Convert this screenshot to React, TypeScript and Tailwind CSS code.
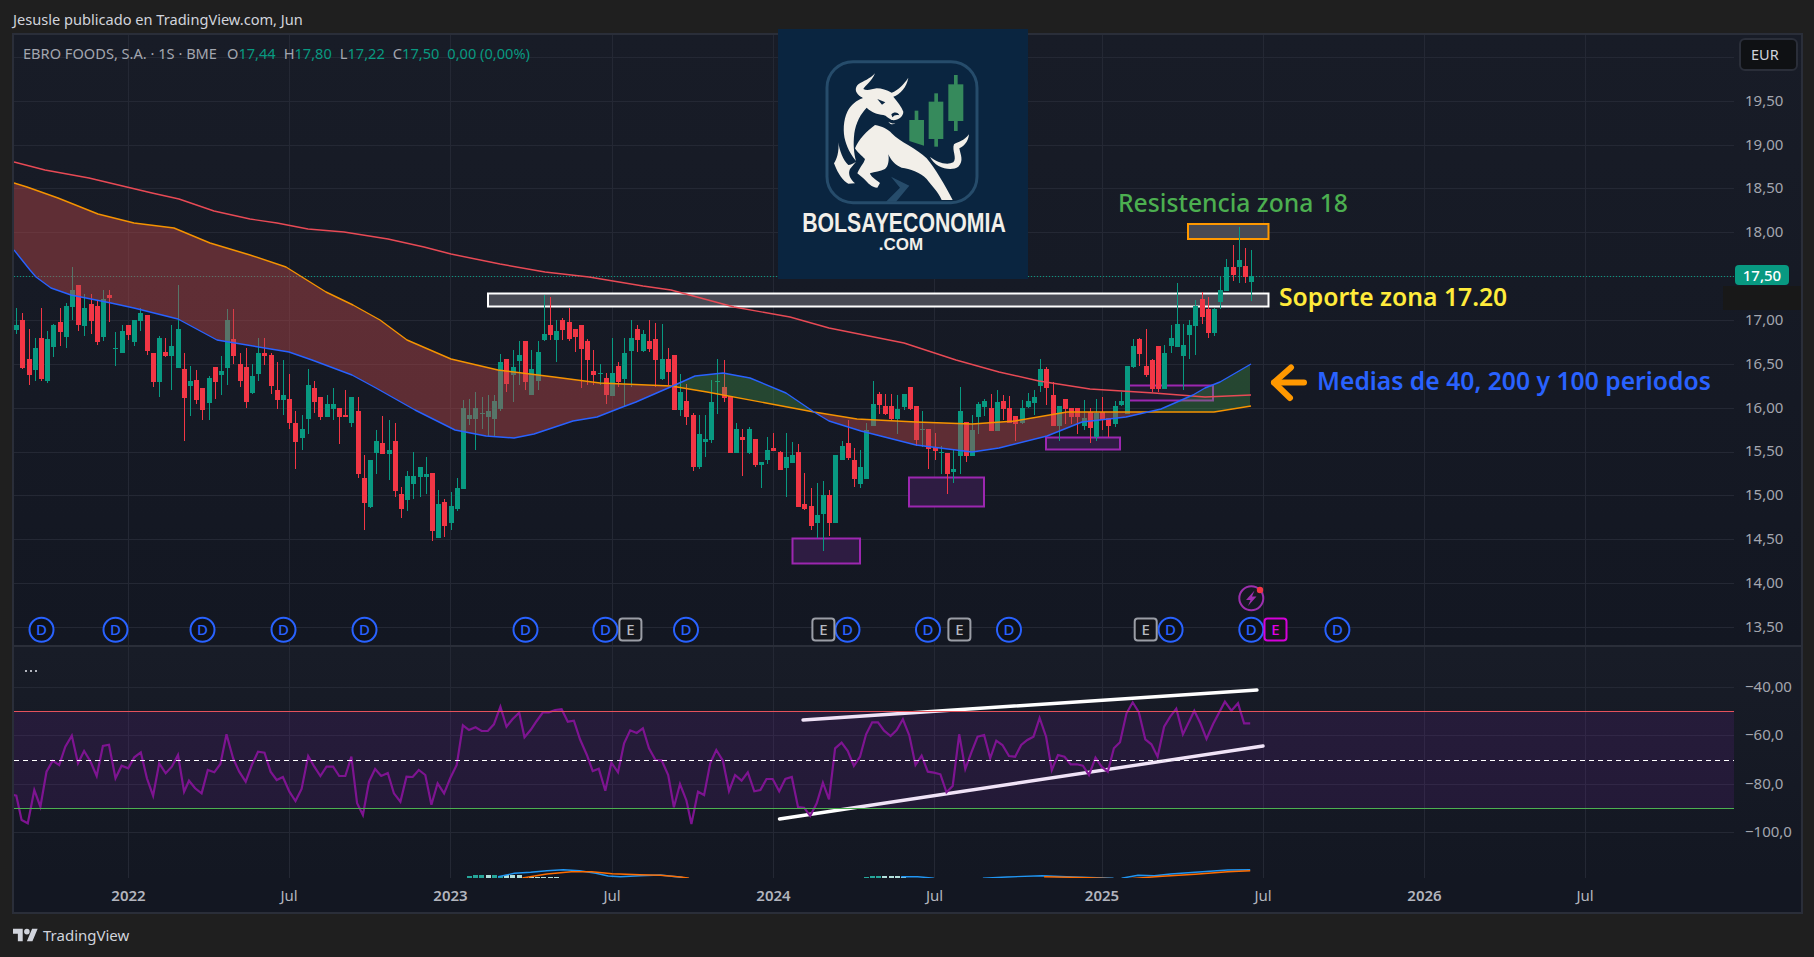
import { Fragment } from "react";

type Pt = [number, number];
type Candle = { green: boolean; top: number; bot: number; high: number; low: number };

// candle rows are "colour bodyTop bodyBottom wickTop wickBottom", read off the chart at y offset + v/3
const ROW_A =
  "g 165 180 113 192|r 150 295 128 298|r 267 315 178 345|g 234 300 205 332|r 204 327 113 332|g 207 333 183 338|g 165 231 162 262|r 156 186 113 228|g 108 201 100 234|g 60 111 -9 150|r 45 165 45 183|g 114 168 72 198|r 102 153 72 192|r 108 216 90 225|g 87 201 60 213|r 75 84 60 156|g 234 237 186 288|g 183 249 165 250|r 165 195 165 210|g 150 216 150 228|g 129 153 114 183|r 135 243 135 255|r 249 336 249 351|g 204 336 198 381|r 246 258 205 260|g 228 258 165 360|g 177 294 45 294|r 297 384 249 513|g 333 348 288 438|r 330 390 300 402|r 354 420 354 450|g 324 399 318 450|r 291 336 291 387|g 303 315 258 375|g 150 294 117 345|r 207 258 117 282|r 282 333 249 351|r 291 396 234 414|g 318 369 282 372|g 249 312 205 333|r 249 258 205 285|r 255 348 248 372|r 360 390 276 417|g 375 390 270 435|r 387 459 312 477|r 459 516 423 597|g 477 504 435 540|g 345 447 297 492|r 354 396 333 429|r 381 441 381 450|g 402 441 375 441|g 402 417 354 450|r 414 441 414 522|r 435 441 360 441|g 381 459 381 471|r 423 612 381 624|r 624 699 555 780|g 570 711 570 714|g 513 549 480 612|r 519 552 438 552|g 540 552 450 630|r 513 663 459 681|r 672 717 651 744|g 618 690 603 723|g 618 642 546 687|g 591 621 591 681|g 612 621 561 672|r 609 783 609 813|g 702 804 660 804|r 696 768 687 801|g 708 759 666 780|g 654 717 624 723|g 414 657 390 657|g 435 447 387 465|g 414 447 366 540|g 429 432 380 477|g 423 441 375 498|g 393 447 375 498|g 276 417 252 423|r 267 342 267 366|g 291 315 240 396|g 255 273 213 345|r 213 336 213 360|g 297 375 240 375|g 246 333 213 360|g 192 210 75 213|r 165 195 81 210|g 183 210 150 276|r 150 180 145 210|r 156 207 114 213|r 177 201 177 246|r 165 237 165 354|r 213 270 207 345|r 303 315 240 345|g 309 312 282 345|r 324 375 309 402|g 309 378 204 378|r 288 336 276 350";
const ROW_B =
  "g 189 267 145 348|g 144 183 90 292|r 117 150 105 186|g 132 183 120 186|r 153 177 90 186|r 147 210 100 290|g 207 267 102 270|r 207 246 174 285|r 195 360 195 360|g 306 360 252 378|r 333 381 283 405|r 375 531 370 543|g 432 531 374 537|g 447 456 375 500|g 336 450 270 459|g 273 276 207 372|r 291 324 210 336|r 318 489 318 489|g 417 489 400 489|r 441 450 417 558|g 417 489 411 492|r 447 525 447 531|g 516 525 516 594|g 480 510 440 522|r 474 483 429 483|r 486 540 483 540|g 501 534 429 621|g 495 519 456 519|r 486 651 462 651|r 642 657 548 660|r 648 708 594 720|g 675 699 579 744|g 615 672 573 783|r 615 699 600 738|g 495 699 495 699|g 468 510 453 510|r 459 504 390 510|r 510 567 474 591|g 531 582 480 594|g 420 567 400 567|g 342 408 273 408|r 312 345 306 372|r 348 372 312 375|r 348 387 312 390|g 357 387 315 432|g 312 351 312 360|r 291 357 291 360|r 348 450 348 468|g 417 420 363 470|r 417 477 417 537|r 470 483 430 510|g 486 489 468 552|r 489 552 489 612|g 537 546 480 579|g 363 498 292 552|r 396 498 396 516|g 420 498 375 498|g 342 381 336 432|g 333 351 327 378|r 354 423 312 423|g 336 423 300 423|r 333 357 315 390|r 354 399 318 399|r 378 402 378 453|g 354 399 330 402|g 333 351 310 354|g 321 339 300 375|g 237 288 207 306|r 237 294 232 345|r 315 408 276 408|g 348 408 348 453|r 327 357 327 402|r 354 381 354 402|r 354 381 354 432|g 384 408 330 420|r 366 414 354 459|g 369 441 327 453|r 366 390 321 420|r 384 408 384 441|g 348 402 333 411|g 333 345 306 348|g 228 372 228 372";
const ROW_C =
  "g 498 562 477 565|r 477 522 474 558|r 558 585 447 592|r 540 627 537 636|r 498 627 498 636|g 519 627 495 627|g 474 498 435 519|g 432 501 309 501|g 495 528 432 630|g 435 465 420 537|g 378 438 360 525|r 357 411 336 432|r 387 459 351 474|g 387 459 384 468|g 330 366 290 387|g 261 333 237 333|r 261 285 195 304|g 240 261 141 309|r 258 291 205 309|g 288 306 210 363";

function parseCandles(row: string, offset: number): Candle[] {
  return row.split("|").map((r) => {
    const [c, a, b, h, l] = r.split(" ");
    return {
      green: c === "g",
      top: offset + Number(a) / 3,
      bot: offset + Number(b) / 3,
      high: offset + Number(h) / 3,
      low: offset + Number(l) / 3,
    };
  });
}

const CANDLES = [
  ...parseCandles(ROW_A, 270),
  ...parseCandles(ROW_B, 290),
  ...parseCandles(ROW_C, 180),
];

const RED_MA: Pt[] = [
  [14, 162], [45, 170], [89, 178], [152, 193], [179, 199], [214, 211], [250, 219], [277, 223], [308, 229], [344, 232], [388, 239], [424, 247], [451, 254], [500, 264], [545, 272], [589, 277], [643, 286], [671, 290], [734, 307], [790, 317], [829, 328], [904, 343], [956, 360], [999, 372], [1039, 381], [1090, 389], [1154, 393], [1205, 397], [1251, 395],
];
const ORANGE_MA: Pt[] = [
  [14, 183], [27, 187], [58, 198], [98, 214], [134, 223], [174, 228], [210, 243], [250, 255], [286, 267], [326, 292], [353, 305], [380, 320], [407, 340], [451, 359], [498, 370], [554, 377], [600, 383], [671, 386], [707, 392], [766, 403], [814, 412], [857, 419], [916, 422], [972, 424], [1015, 421], [1067, 412], [1122, 412], [1185, 412], [1214, 412], [1251, 406],
];
const BLUE_MA: Pt[] = [
  [14, 250], [22, 260], [30, 270], [36, 277], [51, 288], [71, 295], [111, 303], [134, 308], [178, 319], [217, 340], [289, 352], [312, 360], [352, 375], [376, 388], [415, 410], [455, 430], [486, 436], [514, 438], [534, 434], [573, 421], [597, 417], [620, 408], [636, 402], [675, 385], [695, 376], [723, 373], [750, 378], [786, 393], [814, 412], [829, 421], [861, 431], [916, 445], [972, 452], [999, 448], [1047, 436], [1082, 422], [1126, 417], [1161, 409], [1193, 395], [1205, 388], [1220, 382], [1251, 364],
];

const RSI_A: Pt[] = [
  [33, 435], [40, 437], [53, 510], [68, 520], [84, 420], [99, 470], [114, 365], [129, 332], [145, 345], [160, 290], [176, 257], [191, 340], [206, 303], [222, 335], [237, 378], [252, 288], [267, 284], [283, 385], [298, 347], [314, 355], [329, 322], [345, 307], [360, 385], [375, 437], [390, 340], [406, 370], [421, 350], [436, 315], [451, 425], [463, 392], [478, 415], [494, 430], [509, 360], [525, 367], [540, 342], [555, 253], [571, 325], [586, 365], [602, 395], [617, 345], [632, 305], [648, 308], [663, 365], [678, 390], [693, 381], [709, 425], [724, 453], [739, 417], [755, 318], [770, 350], [785, 378], [800, 350], [816, 350], [831, 378], [846, 378], [861, 320], [875, 460], [889, 495], [904, 395], [919, 357], [934, 378], [950, 369], [965, 430], [981, 455], [996, 380], [1011, 381], [1026, 360], [1042, 375], [1057, 464], [1072, 400], [1088, 430], [1103, 385], [1119, 345], [1134, 226], [1149, 240], [1165, 232], [1180, 243], [1195, 243], [1210, 223], [1226, 170], [1241, 230], [1256, 207], [1272, 188], [1285, 262], [1300, 240], [1315, 213], [1330, 187], [1345, 187], [1360, 180], [1376, 178], [1391, 215], [1406, 212], [1421, 268], [1438, 315], [1452, 363], [1467, 356], [1483, 422], [1498, 338], [1514, 367], [1529, 280], [1544, 241], [1560, 249],
];
const RSI_B: Pt[] = [
  [7, 235], [22, 295], [38, 330], [53, 331], [69, 375], [83, 472], [98, 402], [114, 452], [126, 522], [142, 425], [157, 435], [172, 340], [187, 300], [203, 332], [218, 423], [233, 375], [249, 392], [264, 367], [280, 424], [295, 420], [310, 387], [325, 387], [341, 424], [356, 387], [372, 381], [387, 471], [402, 473], [417, 498], [433, 460], [448, 398], [463, 448], [478, 295], [494, 278], [509, 303], [524, 348], [539, 320], [554, 253], [569, 217], [583, 217], [598, 242], [614, 258], [629, 240], [644, 208], [660, 257], [675, 345], [690, 317], [705, 365], [720, 368], [736, 373], [751, 427], [766, 408], [782, 253], [797, 357], [812, 307], [827, 260], [843, 255], [858, 325], [873, 272], [888, 285], [904, 318], [919, 320], [934, 285], [949, 270], [964, 260], [979, 204], [995, 260], [1009, 360], [1024, 315], [1040, 320], [1055, 343], [1070, 343], [1085, 347], [1100, 375], [1116, 323], [1131, 350], [1146, 365], [1161, 295], [1176, 277], [1192, 190], [1207, 157], [1222, 187], [1238, 268], [1253, 283], [1268, 320], [1284, 230], [1299, 200], [1314, 176], [1330, 253], [1358, 182], [1373, 220], [1388, 267], [1404, 222], [1433, 155], [1449, 182], [1465, 160], [1480, 220], [1495, 220],
];

const RSI_LINE: Pt[] = [
  ...RSI_A.map(([x, y]): Pt => [x / 2.45, 650 + y / 3]),
  ...RSI_B.map(([x, y]): Pt => [640 + x / 2.45, 650 + y / 3]),
];

// macd lines only show where they poke up into the bottom of the pane
const MACD_LEFT = (x: number, y: number): Pt => [x / 2.45, 650 + y / 3];
const MACD_RIGHT = (x: number, y: number): Pt => [640 + x / 2.45, 650 + y / 3];
const MACD_BLUE: Pt[][] = [
  [MACD_LEFT(1220, 680), MACD_LEFT(1260, 670), MACD_LEFT(1300, 667), MACD_LEFT(1340, 662), MACD_LEFT(1380, 659), MACD_LEFT(1420, 662), MACD_LEFT(1460, 670), MACD_LEFT(1490, 678), MACD_LEFT(1520, 680), MACD_LEFT(1568, 677), MACD_RIGHT(50, 675), MACD_RIGHT(100, 682), MACD_RIGHT(120, 686)],
  [MACD_RIGHT(640, 680), MACD_RIGHT(680, 680), MACD_RIGHT(720, 685)],
  [MACD_RIGHT(840, 685), MACD_RIGHT(900, 681), MACD_RIGHT(985, 677), MACD_RIGHT(1060, 681), MACD_RIGHT(1160, 685)],
  [MACD_RIGHT(1180, 685), MACD_RIGHT(1220, 676), MACD_RIGHT(1260, 677), MACD_RIGHT(1300, 672), MACD_RIGHT(1360, 667), MACD_RIGHT(1440, 660), MACD_RIGHT(1495, 659)],
];
const MACD_ORANGE: Pt[][] = [
  [MACD_LEFT(1280, 684), MACD_LEFT(1340, 672), MACD_LEFT(1400, 665), MACD_LEFT(1450, 665), MACD_LEFT(1500, 671), MACD_LEFT(1568, 674), MACD_RIGHT(50, 676), MACD_RIGHT(100, 681), MACD_RIGHT(120, 685)],
  [MACD_RIGHT(990, 680), MACD_RIGHT(1100, 683), MACD_RIGHT(1160, 686)],
  [MACD_RIGHT(1200, 686), MACD_RIGHT(1280, 679), MACD_RIGHT(1360, 673), MACD_RIGHT(1440, 665), MACD_RIGHT(1495, 662)],
];
// x, top y, colour
const MACD_BARS: [number, number, string][] = [
  [467, 876, "#26a69a"], [473, 875, "#26a69a"], [479, 875, "#26a69a"], [486, 875, "#b2dfdb"], [492, 875, "#26a69a"], [498, 876, "#26a69a"], [504, 875, "#b2dfdb"], [510, 875, "#b2dfdb"], [517, 875, "#b2dfdb"], [523, 877, "#b2dfdb"], [529, 877, "#b2dfdb"], [535, 877, "#b2dfdb"], [541, 877, "#b2dfdb"], [548, 877, "#b2dfdb"], [554, 877, "#b2dfdb"],
  [864, 877, "#26a69a"], [870, 876, "#26a69a"], [876, 876, "#26a69a"], [882, 876, "#b2dfdb"], [889, 876, "#b2dfdb"], [895, 876, "#b2dfdb"], [901, 877, "#b2dfdb"],
];

const H_LINES = [57, 101, 145, 188, 232, 276, 320, 364, 408, 452, 495, 539, 583, 627];
const V_LINES = [128.5, 289.5, 450.5, 612.5, 773.5, 934.5, 1102.5, 1263.5, 1424.5, 1585.5];
const RSI_H_LINES = [687, 735, 784, 832];

const PRICES = ["19,50", "19,00", "18,50", "18,00", "17,50", "17,00", "16,50", "16,00", "15,50", "15,00", "14,50", "14,00", "13,50"];
const RSI_LABELS = ["−40,00", "−60,0", "−80,0", "−100,0"];

const TICKS: { x: number; label: string; bold?: boolean }[] = [
  { x: 128.5, label: "2022", bold: true },
  { x: 289, label: "Jul" },
  { x: 450.5, label: "2023", bold: true },
  { x: 612, label: "Jul" },
  { x: 773.5, label: "2024", bold: true },
  { x: 934.5, label: "Jul" },
  { x: 1102, label: "2025", bold: true },
  { x: 1263, label: "Jul" },
  { x: 1424.5, label: "2026", bold: true },
  { x: 1585, label: "Jul" },
];

const DIVIDENDS = [41.5, 115.5, 202.5, 283.5, 364.5, 525.5, 605.4, 686, 847.5, 928, 1009, 1170.6, 1251.3, 1337.4];
const EARNINGS = [630.4, 823.4, 959.4, 1145.7];

function yAt(points: Pt[], x: number): number {
  for (let i = 1; i < points.length; i++) {
    if (x <= points[i][0]) {
      const [x0, y0] = points[i - 1];
      const [x1, y1] = points[i];
      return y0 + ((y1 - y0) * (x - x0)) / (x1 - x0);
    }
  }
  return points[points.length - 1][1];
}

function toPath(points: Pt[]) {
  return points.map(([x, y]) => `${x.toFixed(1)},${y.toFixed(1)}`).join(" ");
}

// polygons between the blue and orange averages, red while orange is on top, green otherwise
function maBands() {
  const bands: { red: boolean; points: string }[] = [];
  let upper: Pt[] = [];
  let lower: Pt[] = [];
  let red = true;
  const flush = () => {
    if (upper.length > 1) {
      bands.push({ red, points: toPath([...upper, ...lower.reverse()]) });
    }
    upper = [];
    lower = [];
  };
  for (let x = 14; x <= 1251; x += 2) {
    const o = yAt(ORANGE_MA, x);
    const b = yAt(BLUE_MA, x);
    const nowRed = o < b;
    if (nowRed !== red) {
      upper.push([x, (o + b) / 2]);
      lower.push([x, (o + b) / 2]);
      flush();
      red = nowRed;
      upper.push([x, (o + b) / 2]);
      lower.push([x, (o + b) / 2]);
      continue;
    }
    upper.push([x, Math.min(o, b)]);
    lower.push([x, Math.max(o, b)]);
  }
  flush();
  return bands;
}

function Grid({ lines }: { lines: number[] }) {
  return (
    <g stroke="#242834" strokeWidth={1} shapeRendering="crispEdges">
      {lines.map((y) => (
        <line key={y} x1={14} x2={1734} y1={y + 0.5} y2={y + 0.5} />
      ))}
      {V_LINES.map((x) => (
        <line key={x} x1={x} x2={x} y1={0} y2={900} />
      ))}
    </g>
  );
}

function Zone({
  x,
  y,
  w,
  h,
  stroke,
  fill,
}: {
  x: number;
  y: number;
  w: number;
  h: number;
  stroke: string;
  fill: string;
}) {
  return <rect x={x} y={y} width={w} height={h} stroke={stroke} strokeWidth={2} fill={fill} />;
}

function Candles() {
  return (
    <g shapeRendering="crispEdges">
      {CANDLES.map((c, i) => {
        const cx = Math.round(16.2 + i * 6.206);
        const color = c.green ? "#089981" : "#f23645";
        return (
          <Fragment key={i}>
            <rect x={cx} y={c.high} width={1} height={c.low - c.high} fill={color} />
            <rect x={cx - 2} y={c.top} width={5} height={Math.max(c.bot - c.top, 1)} fill={color} />
          </Fragment>
        );
      })}
    </g>
  );
}

function EventMarkers() {
  return (
    <g fontSize={15} fontWeight={500} textAnchor="middle">
      {DIVIDENDS.map((x) => (
        <g key={x}>
          <circle cx={x} cy={629.7} r={12} fill="#0e1119" stroke="#2962ff" strokeWidth={2} />
          <text x={x} y={635} fill="#2962ff">
            D
          </text>
        </g>
      ))}
      {EARNINGS.map((x) => (
        <g key={x}>
          <rect x={x - 11} y={618.5} width={22} height={22} rx={3} fill="#14161c" stroke="#9b9ea6" strokeWidth={2} />
          <text x={x} y={635} fill="#b8bbc2">
            E
          </text>
        </g>
      ))}
      <rect x={1264.5} y={618.5} width={22} height={22} rx={3} fill="#14161c" stroke="#d500d9" strokeWidth={2} />
      <text x={1275.5} y={635} fill="#e000e6">
        E
      </text>
      <circle cx={1251.3} cy={598.3} r={12} fill="#151823" stroke="#9c2fae" strokeWidth={2} />
      <path d="M1254.5 590.5 L1246 600 L1250.5 600 L1248 606 L1256.5 596.5 L1252 596.5 Z" fill="#9c2fae" />
      <circle cx={1260} cy={590} r={3.2} fill="#f23645" />
    </g>
  );
}

function PricePlot() {
  return (
    <svg viewBox="14 35 1720 610" className="block h-[610px] w-[1720px] shrink-0">
      <Grid lines={H_LINES} />
      <line x1={14} x2={1736} y1={276.5} y2={276.5} stroke="#089981" strokeDasharray="1 2" shapeRendering="crispEdges" />

      <Zone x={488} y={293.5} w={780.5} h={13} stroke="#ffffff" fill="#484a54" />
      <Zone x={1188} y={224} w={80.5} h={15} stroke="#ff9800" fill="#484a54" />
      <Zone x={792.5} y={538.5} w={67.5} h={25} stroke="#9c27b0" fill="#2e1c42" />
      <Zone x={909} y={477.5} w={75} h={29} stroke="#9c27b0" fill="#2e1c42" />
      <Zone x={1046} y={437.5} w={74} h={12} stroke="#9c27b0" fill="#2e1c42" />
      <Zone x={1128} y={385.5} w={85} h={15} stroke="#9c27b0" fill="rgba(156,39,176,0.08)" />

      <Candles />

      {maBands().map((band, i) => (
        <polygon
          key={i}
          points={band.points}
          fill={band.red ? "rgba(184,71,74,0.45)" : "rgba(76,175,80,0.3)"}
        />
      ))}

      <g fill="none" strokeWidth={1.4} strokeLinejoin="round">
        <polyline points={toPath(RED_MA)} stroke="#e84a55" />
        <polyline points={toPath(ORANGE_MA)} stroke="#f59300" />
        <polyline points={toPath(BLUE_MA)} stroke="#2962ff" />
      </g>

      <g fill="none" stroke="#ff9800" strokeWidth={6} strokeLinecap="round" strokeLinejoin="round">
        <path d="M1291 367.5 L1274 382.5 L1290 398" />
        <path d="M1274 382.5 L1304 382.5" />
      </g>

      <EventMarkers />
    </svg>
  );
}

function RsiPlot() {
  return (
    <svg viewBox="14 647 1720 231" className="block h-[231px] w-[1720px] shrink-0">
      <Grid lines={RSI_H_LINES} />

      <g stroke="#ffffff" strokeWidth={3.4} strokeLinecap="round">
        <line x1={803} y1={720} x2={1257} y2={690} />
        <line x1={779.5} y1={819} x2={1263} y2={746} />
      </g>

      <rect x={14} y={711.5} width={1720} height={96.5} fill="rgba(140,36,194,0.13)" />

      <polyline points={toPath(RSI_LINE)} fill="none" stroke="#7e1491" strokeWidth={2.2} strokeLinejoin="miter" />

      <g shapeRendering="crispEdges">
        <line x1={14} x2={1734} y1={711.5} y2={711.5} stroke="#e5525c" />
        <line x1={14} x2={1734} y1={808.5} y2={808.5} stroke="#4caf50" />
        <line x1={14} x2={1734} y1={760.5} y2={760.5} stroke="#ffffff" strokeDasharray="5 4" />
      </g>

      <g shapeRendering="crispEdges">
        {MACD_BARS.map(([x, y, color]) => (
          <rect key={x} x={x} y={y} width={5} height={878 - y} fill={color} />
        ))}
      </g>
      <g fill="none" strokeWidth={1.4}>
        {MACD_BLUE.map((line, i) => (
          <polyline key={i} points={toPath(line)} stroke="#2196f3" />
        ))}
        {MACD_ORANGE.map((line, i) => (
          <polyline key={i} points={toPath(line)} stroke="#ff6d00" />
        ))}
      </g>
    </svg>
  );
}

function BullLogo() {
  return (
    <svg viewBox="0 0 250 250" className="block h-full w-full">
      <rect width={250} height={250} fill="#0a2540" />
      <g transform="translate(42 26) scale(0.3333)">
        <rect x={21} y={20} width={450} height={423} rx={78} fill="none" stroke="#264c6b" strokeWidth={9} />
        <path d="M213 365 L268 392 L228 440 L198 440 L240 398 Z" fill="#264c6b" />
        <g fill="#368a5c">
          <rect x={284} y={167} width={11} height={40} />
          <path d="M268 195 H312 V272 L268 258 Z" />
          <rect x={343} y={115} width={11} height={160} />
          <rect x={326} y={140} width={44} height={112} />
          <rect x={402} y={60} width={11} height={168} />
          <rect x={385} y={88} width={45} height={110} />
        </g>
        <g fill="#f2efe9">
          <path d="M165 55 C150 72 130 78 115 88 C104 98 105 112 118 122 C124 126 130 128 128 130 C110 136 92 150 82 170 C70 195 68 230 76 258 C84 285 96 303 108 318 C102 295 99 270 103 235 C107 205 122 176 140 158 C155 172 172 178 190 180 C200 182 204 190 215 195 C232 198 250 186 250 170 C245 155 232 140 220 125 C240 118 260 98 265 68 C250 90 235 105 215 113 C200 105 185 100 170 100 C155 103 140 108 130 102 C135 92 155 80 165 55 Z" />
          <path d="M205 200 C212 204 218 206 226 205 C218 210 210 208 205 200 Z" />
          <path d="M165 210 C185 214 205 222 215 235 C240 262 290 280 320 310 C345 340 375 390 398 435 L365 435 C355 410 335 392 320 372 C300 350 270 342 245 338 C225 330 212 315 205 298 C208 315 205 335 195 342 C180 350 165 350 150 355 C152 365 165 372 180 384 L172 398 C155 398 145 385 130 370 L112 355 C120 335 132 325 135 312 C125 302 110 290 105 280 C115 255 140 228 165 210 Z" />
          <path d="M55 262 C58 285 70 318 85 330 C92 330 100 325 108 320 L90 342 C84 355 88 370 105 385 L85 386 C70 378 55 360 42 325 C50 315 58 290 55 262 Z" />
          <path d="M330 305 C350 322 380 332 400 322 C412 310 395 285 402 268 C415 260 432 258 447 238 C445 262 430 275 418 280 C422 300 432 318 415 335 C395 350 345 340 330 305 Z" />
        </g>
        <g fill="#0a2540">
          <path d="M172 132 L196 142 L186 149 Z" />
          <path d="M214 178 C222 169 236 172 238 181 C230 178 222 180 217 187 Z" />
        </g>
      </g>
      <text transform="translate(126 202.7) scale(0.76 1)" fontSize={28} fontWeight={700} fill="#f2efe9" textAnchor="middle" className="[font-family:'Liberation_Sans',sans-serif]">
        BOLSAYECONOMIA
      </text>
      <text x={123} y={221} fontSize={17} fontWeight={700} fill="#f2efe9" textAnchor="middle" className="[font-family:'Liberation_Sans',sans-serif]">
        .COM
      </text>
    </svg>
  );
}

export default function App() {
  return (
    <div className="relative flex h-[957px] w-[1814px] flex-col overflow-hidden bg-[#1f1f1f] [font-family:'Noto_Sans',sans-serif]">
      <header className="flex h-[33px] shrink-0 items-center pl-[13px] pt-[7px] text-[14.6px] text-[#d1d4dc]">
        Jesusle publicado en TradingView.com, Jun
      </header>

      <main className="ml-[12px] flex h-[881px] w-[1791px] shrink-0 flex-col border-2 border-[#2a2e39] bg-[#131722]">
        <section className="relative flex h-[610px] shrink-0 bg-linear-to-b from-[#181c27] to-[#131722]">
          <PricePlot />
          <div className="h-[610px] w-[67px] shrink-0 pt-[43px] text-[15px] text-[#a3a6af]">
            {PRICES.map((price) =>
              price === "17,50" ? (
                <div key={price} className="flex h-[43.85px] items-center pl-px">
                  <span className="flex h-5 w-[54px] items-center justify-center rounded-sm bg-[#089981] font-medium text-white">
                    {price}
                  </span>
                </div>
              ) : (
                <div key={price} className="flex h-[43.85px] items-center pl-[11px]">
                  {price}
                </div>
              ),
            )}
          </div>

          <div className="absolute left-[9px] top-[8px] flex gap-[8px] whitespace-nowrap text-[14.6px] text-[#a3a6af]">
            <span className="mr-[2px]">EBRO FOODS, S.A. · 1S · BME</span>
            <span>
              O<span className="text-[#089981]">17,44</span>
            </span>
            <span>
              H<span className="text-[#089981]">17,80</span>
            </span>
            <span>
              L<span className="text-[#089981]">17,22</span>
            </span>
            <span>
              C<span className="text-[#089981]">17,50</span>
            </span>
            <span className="text-[#089981]">0,00 (0,00%)</span>
          </div>

          <div className="absolute left-[1725px] top-[3px] flex h-[33px] w-[59px] items-center rounded-md border-2 border-[#2a2e39] bg-[#0f1114] pl-[10px] text-[14.5px] text-[#d1d4dc]">
            EUR
          </div>

          <div className="absolute left-[1709px] top-[251px] h-6 w-[78px] bg-[#181818]" />
        </section>

        <div className="h-[2px] shrink-0 bg-[#2a2e39]" />

        <section className="relative flex h-[231px] shrink-0 bg-linear-to-b from-[#181c27] to-[#131722]">
          <RsiPlot />
          <div className="w-[67px] shrink-0 pt-[15px] text-[15px] text-[#a3a6af]">
            {RSI_LABELS.map((label) => (
              <div key={label} className="flex h-[48.33px] items-center pl-[11px]">
                {label}
              </div>
            ))}
          </div>
          <div className="absolute left-[11px] top-[23px] flex gap-[3px]">
            <span className="h-[2px] w-[2px] bg-[#b2b5be]" />
            <span className="h-[2px] w-[2px] bg-[#b2b5be]" />
            <span className="h-[2px] w-[2px] bg-[#b2b5be]" />
          </div>
        </section>

        <div className="flex h-[34px] shrink-0 items-center text-[15px] text-[#b2b5be]">
          {TICKS.map((tick, i) => (
            <div
              key={tick.label + tick.x}
              className={`flex w-0 justify-center ${tick.bold ? "font-semibold" : ""}`}
              style={{ marginLeft: i === 0 ? tick.x - 14 : tick.x - TICKS[i - 1].x }}
            >
              {tick.label}
            </div>
          ))}
        </div>
      </main>

      <footer className="flex flex-1 items-center gap-[5px] pl-[13px] text-[15px] text-[#d1d4dc]">
        <svg viewBox="0 0 36 28" className="h-[19.6px] w-[25px]" fill="#d1d4dc">
          <path d="M14 22H7V11H0V4h14v18zM28 22h-8l7.5-18h8L28 22z" />
          <circle cx={20} cy={8} r={4} />
        </svg>
        TradingView
      </footer>

      <div className="absolute left-[778px] top-[29px] h-[250px] w-[250px]">
        <BullLogo />
      </div>

      <span className="absolute left-[1118px] top-[186px] text-[24.7px] font-medium leading-[34px] text-[#4caf50]">
        Resistencia zona 18
      </span>
      <span className="absolute left-[1279px] top-[280px] text-[24.7px] font-semibold leading-[34px] text-[#ffeb3b]">
        Soporte zona 17.20
      </span>
      <span className="absolute left-[1317px] top-[364px] text-[24.7px] font-semibold leading-[34px] text-[#2962ff]">
        Medias de 40, 200 y 100 periodos
      </span>
    </div>
  );
}
